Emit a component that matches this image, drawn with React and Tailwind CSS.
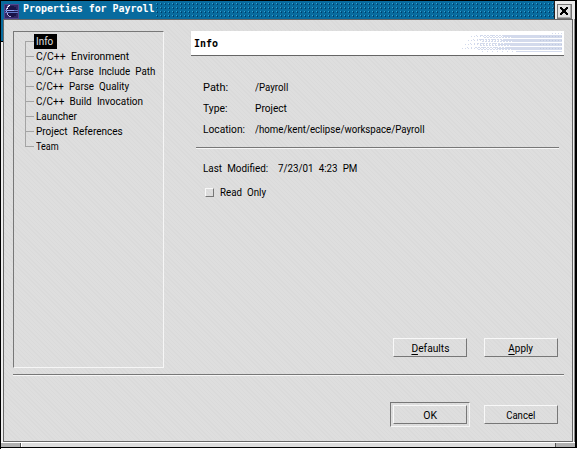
import React from "react";

const pages = [
  ["Info", "scale-x-90"],
  ["C/C++ Environment", "scale-x-[0.945]"],
  ["C/C++ Parse Include Path", "scale-x-[0.885]"],
  ["C/C++ Parse Quality", "scale-x-[0.89]"],
  ["C/C++ Build Invocation", "scale-x-[0.905]"],
  ["Launcher", "scale-x-[0.9]"],
  ["Project References", "scale-x-[0.91]"],
  ["Team", "scale-x-[0.82]"],
];

const etched = "h-[2px] shrink-0 border-t border-t-[#777] border-b border-b-[#f6f6f6]";
const texture =
  "bg-[#dddddd] bg-[repeating-linear-gradient(45deg,#dadada_0px,#dadada_1px,#dedede_1px,#dedede_3px)]";

function Label({ scale, children }) {
  return (
    <span className={"inline-block origin-left whitespace-pre [word-spacing:3px] " + scale}>{children}</span>
  );
}

function Button({ scale, children }) {
  return (
    <button className="flex h-[19px] w-[74px] items-center justify-center border border-t-[#f8f8f8] border-l-[#f8f8f8] border-r-[#777] border-b-[#777] pt-px leading-[13px]">
      <span className={"inline-flex " + scale}>{children}</span>
    </button>
  );
}

function Mnemonic({ children }) {
  return <span className="inline-block h-[13px] border-b border-black">{children}</span>;
}

function EclipseLogo() {
  return (
    <svg width="15" height="15" viewBox="0 0 15 15" shapeRendering="crispEdges" className="mt-[2px] shrink-0">
      <rect width="15" height="15" fill="#302863" />
      <rect x=".5" y=".5" width="14" height="14" fill="none" stroke="#51438f" />
      <circle cx="8" cy="7.5" r="5.5" fill="#191449" />
      <path d="M6 1H4v1H3v2H2v1h2V3h1V2h1zM2 5h1v4H2zM3 9h1v2H3zM4 11h1v1H4zM5 12h2v1H5z" fill="#b2a9dd" />
      <path d="M4 2h1v1H4zM3 4h1v1H3zM5 1h1v1H5z" fill="#fff" />
      <path d="M1 6.5h13M1 8.5h13" stroke="#6078c8" />
      <path d="M3 6.5h7" stroke="#90a4f0" />
    </svg>
  );
}

function TitleBar() {
  return (
    <div className="flex h-[18px] bg-[#086b9e]">
      <div className="flex h-[18px] w-[155px] shrink-0 gap-1 pl-[3px] pt-px">
        <EclipseLogo />
        <span className="whitespace-pre font-['DejaVu_Sans_Mono',monospace] text-[10px] font-bold leading-[13px] tracking-[-0.05px] text-white">
          Properties for Payroll
        </span>
      </div>
      <svg width="398" height="18" shapeRendering="crispEdges" className="shrink-0">
        <defs>
          <pattern id="studs" width="4" height="4" patternUnits="userSpaceOnUse">
            <rect x="0" y="2" width="1" height="1" fill="#2ea4d4" />
            <rect x="1" y="3" width="1" height="1" fill="#003c66" />
            <rect x="1" y="2" width="1" height="1" fill="#074f7d" />
          </pattern>
        </defs>
        <rect y="1" width="398" height="16" fill="url(#studs)" />
      </svg>
      <div className="flex w-[21px] items-end border-l border-[#222] bg-[#ececec] pl-[2px]">
        <svg width="15" height="15" viewBox="0 0 15 15" shapeRendering="crispEdges">
          <rect x=".5" y=".5" width="14" height="14" fill="#e2e2e2" stroke="#777" />
          <path d="M1 13.5h12.5V1" fill="none" stroke="#aaa" />
          <path d="M3 3h2v1h1v1h2V4h1V3h2v2h-1v1H9v2h1v1h1v2H9v-1H8V9H6v1H5v1H3V9h1V8h1V6H4V5H3z" fill="#000" />
        </svg>
      </div>
    </div>
  );
}

function PageTree() {
  return (
    <div className="h-[337px] w-[151px] shrink-0 border border-t-[#777] border-l-[#777] border-r-[#f6f6f6] border-b-[#f6f6f6] pl-[11px] pt-[2px]">
      {pages.map(([label, scale], i) => (
        <div key={label} className="flex h-[15px] items-stretch">
          <div className="flex w-[9px] shrink-0 flex-col">
            <div className={"h-[8px] border-b border-[#a4a4a4] " + (i ? "border-l" : "")} />
            <div className={"h-[7px] " + (i < 7 ? "border-l border-[#a4a4a4]" : "")} />
          </div>
          <div className={"pl-[2px] leading-[15px] " + (i ? "" : "w-[23px] bg-black text-[#e0e0e0]")}>
            <Label scale={scale}>{label}</Label>
          </div>
        </div>
      ))}
    </div>
  );
}

function BannerStripes() {
  return (
    <svg width="102" height="24" shapeRendering="crispEdges" className="mr-[2px] shrink-0">
      {[4, 8, 12, 16].map((y, i) => (
        <g key={y} stroke="#d3daec" strokeWidth="1">
          <path d={`M${11 - i * 3} ${y + 1.5}H55`} strokeDasharray="1 2" />
          <path d={`M${16 - i * 3} ${y + 0.5}H55`} strokeDasharray="1 3" />
          <path d={`M${21 - i * 2} ${y + 0.5}H102M${24 - i * 2} ${y + 2.5}H102`} strokeDasharray="2 1" />
          <path d={`M${43 - i * 2} ${y + 1.5}H102M46 ${y + 0.5}H102M52 ${y + 2.5}H102`} />
          <path d={`M80 ${y + 1.5}H102`} stroke="#c0c9df" strokeDasharray="1 2" />
        </g>
      ))}
      <path d="M22 20.5H56" stroke="#d3daec" strokeDasharray="1 4" />
      <path d="M56 20.5H102" stroke="#d3daec" />
      <path d="M92 2.5H102" stroke="#d3daec" strokeDasharray="1 2" />
    </svg>
  );
}

function Property({ name, nameScale, scale, children }) {
  return (
    <div className="flex h-[21px] items-center">
      <div className="w-[52px] shrink-0"><Label scale={nameScale}>{name}</Label></div>
      <Label scale={scale}>{children}</Label>
    </div>
  );
}

function InfoPage() {
  return (
    <div className="flex w-[373px] flex-col">
      <div className="flex h-[25px] shrink-0 items-start justify-between border-b border-[#666] bg-white pl-[3px]">
        <span className="font-['DejaVu_Sans_Mono',monospace] text-[10px] font-bold leading-[25px]">Info</span>
        <BannerStripes />
      </div>
      <div className="flex flex-col px-[5px] pt-[21px]">
        <div className="pl-[7px]">
          <Property name="Path:" nameScale="scale-x-100" scale="scale-x-[0.88]">/Payroll</Property>
          <Property name="Type:" nameScale="scale-x-[0.94]" scale="scale-x-[0.92]">Project</Property>
          <Property name="Location:" nameScale="scale-x-[0.93]" scale="scale-x-[0.88]">
            /home/kent/eclipse/workspace/Payroll
          </Property>
        </div>
        <div className={etched + " mt-[7px]"} />
        <div className="mt-[12px] flex h-[15px] items-center pl-[7px]">
          <div className="w-[75px] shrink-0"><Label scale="scale-x-90">Last Modified:</Label></div>
          <Label scale="scale-x-[0.89]">7/23/01 4:23 PM</Label>
        </div>
        <div className="mt-[9px] flex h-[15px] items-center gap-[6px] pl-[9px]">
          <span className="h-[9px] w-[9px] border border-t-[#f8f8f8] border-l-[#f8f8f8] border-r-[#777] border-b-[#777]" />
          <Label scale="scale-x-[0.885]">Read Only</Label>
        </div>
      </div>
      <div className="mt-auto flex justify-end gap-[17px] pb-[11px] pr-[6px]">
        <Button scale="scale-x-[0.93]"><Mnemonic>D</Mnemonic>efaults</Button>
        <Button scale="scale-x-90"><Mnemonic>A</Mnemonic>pply</Button>
      </div>
    </div>
  );
}

export default function App() {
  return (
    <div className="flex h-[449px] w-[577px] flex-col overflow-hidden border-t border-l border-black bg-white pb-[1px] font-[Roboto,'Liberation_Sans',sans-serif] text-[11px] leading-[13px] text-black">
      <div className="flex min-h-0 flex-1 flex-col border-r-2 border-b border-black">
        <TitleBar />
        <div className="flex min-h-0 flex-1">
          <div className="w-[2px] shrink-0">
            <div className="h-[22px] bg-[#086b9e]" />
            <div className="h-px bg-black" />
            <div className="h-[400px] bg-[#eee]" />
          </div>
          <div className={"flex flex-1 flex-col border border-[#666] pl-[9px] pr-[8px] pt-[11px] " + texture}>
            <div className="flex gap-[27px]">
              <PageTree />
              <InfoPage />
            </div>
            <div className={etched + " mt-[6px]"} />
            <div className="mt-[26px] flex items-center justify-end gap-[14px] pr-[6px]">
              <div className="border border-t-[#777] border-l-[#777] border-r-[#f6f6f6] border-b-[#f6f6f6] p-[2px]">
                <Button scale="scale-x-[0.95]">OK</Button>
              </div>
              <Button scale="scale-x-[0.87]">Cancel</Button>
            </div>
          </div>
          <div className="w-[2px] shrink-0 border-r border-[#888] bg-[#eee]" />
        </div>
        <div className="flex h-[5px] shrink-0 border-t border-white">
          <div className="w-[20px] border-r border-[#555] bg-[#b0b0b0]" />
          <div className="flex-1 border-l border-white bg-[#ddd]" />
          <div className="w-[20px] border-l border-[#555] bg-[#b0b0b0]" />
        </div>
      </div>
    </div>
  );
}
